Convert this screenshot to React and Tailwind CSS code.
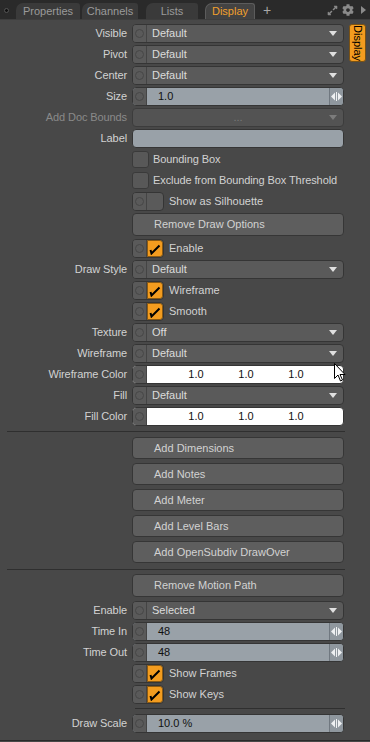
import React from "react";
import { FaCog, FaExpandAlt } from "react-icons/fa";

const font = { fontFamily: '"Liberation Sans", Arial, sans-serif' };

function Dot() {
  return (
    <div className="w-[14px] h-full flex items-center justify-center border-r border-[#444] bg-[#5a5a5a] shrink-0">
      <div className="w-[9px] h-[9px] rounded-full border border-[#464646]" />
    </div>
  );
}

function Triangle({ color = "#e0e0e0" }) {
  return (
    <svg width="8" height="5" viewBox="0 0 8 5" className="mr-[6px]">
      <path d="M0 0 L8 0 L4 5 Z" fill={color} />
    </svg>
  );
}

function Row({ label, dim, children }) {
  return (
    <div className="flex items-center h-[19px]">
      <div
        className={`w-[127px] text-right text-[11px] leading-none tracking-[-0.1px] ${
          dim ? "text-[#8a8a8a]" : "text-[#d2d2d2]"
        }`}
      >
        {label}
      </div>
      <div className="ml-[5px] flex items-center">{children}</div>
    </div>
  );
}

function Dropdown({ value }) {
  return (
    <div className="w-[212px] h-[19px] rounded-[4px] border border-[#353535] bg-[#5a5a5a] flex items-center overflow-hidden">
      <Dot />
      <div className="flex-1 pl-[5px] text-[11px] text-[#dcdcdc]">{value}</div>
      <Triangle />
    </div>
  );
}

function DisabledDropdown() {
  return (
    <div className="w-[212px] h-[19px] rounded-[4px] border border-[#3c3c3c] bg-[#535353] flex items-center">
      <div className="flex-1 text-center text-[11px] text-[#7a7a7a] leading-none pl-[14px]">...</div>
      <Triangle color="#7c7c7c" />
    </div>
  );
}

function Arrows() {
  return (
    <svg width="11" height="9" viewBox="0 0 11 9">
      <path d="M0 4.5 L4 0.5 L4 8.5 Z" fill="#eef0f2" />
      <rect x="5" y="0" width="1" height="9" fill="#eef0f2" />
      <path d="M11 4.5 L7 0.5 L7 8.5 Z" fill="#eef0f2" />
    </svg>
  );
}

function NumField({ value }) {
  return (
    <div className="w-[212px] h-[19px] rounded-[4px] border border-[#353535] bg-[#99a1a8] flex items-center overflow-hidden">
      <Dot />
      <div className="flex-1 pl-[11px] text-[11px] text-[#111]">{value}</div>
      <div className="w-[14px] h-full border-l border-[#707880] bg-[#8f979e] flex items-center justify-center">
        <Arrows />
      </div>
    </div>
  );
}

function ColorField() {
  return (
    <div className="w-[212px] h-[19px] rounded-[4px] border border-[#353535] bg-white flex items-center overflow-hidden">
      <Dot />
      <div className="flex pl-[24px] text-[11px] text-[#111]">
        <span className="w-[50px] text-center">1.0</span>
        <span className="w-[50px] text-center">1.0</span>
        <span className="w-[50px] text-center">1.0</span>
      </div>
    </div>
  );
}

function Check() {
  return (
    <svg width="12" height="12" viewBox="0 0 12 12">
      <path d="M1.5 7 L2.5 10.5 L10.5 2.5" stroke="#000" strokeWidth="2" fill="none" />
    </svg>
  );
}

function Box({ label }) {
  return (
    <div className="flex items-center h-[19px] pl-[132px]">
      <div className="w-[17px] h-[17px] rounded-[3px] border border-[#3a3a3a] bg-[#585858]" />
      <span className="ml-[4px] text-[11px] text-[#d2d2d2] tracking-[-0.1px]">{label}</span>
    </div>
  );
}

function Toggle({ label, checked }) {
  return (
    <div className="flex items-center h-[19px] pl-[132px]">
      <div className="w-[32px] h-[19px] rounded-[4px] border border-[#353535] bg-[#5a5a5a] flex overflow-hidden">
        <Dot />
        <div
          className={`flex-1 flex items-center justify-center ${
            checked ? "bg-[#f39c1f] border border-[#8a5a14] rounded-r-[3px]" : ""
          }`}
        >
          {checked && <Check />}
        </div>
      </div>
      <span className="ml-[5px] text-[11px] text-[#d2d2d2]">{label}</span>
    </div>
  );
}

function Button({ label, tall }) {
  return (
    <div className="pl-[132px]">
      <div
        className={`w-[212px] ${
          tall ? "h-[23px]" : "h-[22px]"
        } rounded-[4px] border border-[#363636] bg-[#5e5e5e] flex items-center pl-[21px] text-[11px] text-[#d2d2d2]`}
      >
        {label}
      </div>
    </div>
  );
}

function Sep({ h, at, from = 7 }) {
  return (
    <div className={`relative ${h}`}>
      <div className={`absolute ${at} right-[3px] h-[1px] bg-[#2f2f2f]`} style={{ left: from }} />
    </div>
  );
}

function Tab({ label, w, active }) {
  return (
    <div
      className={`${w} h-[16px] rounded-tl-[7px] rounded-tr-[3px] flex items-center justify-center text-[11px] ${
        active
          ? "bg-[#434343] text-[#f2a02c] border-t border-l border-r border-[#5c5c5c]"
          : "bg-[#3a3a3a] text-[#9a9a9a]"
      }`}
    >
      {label}
    </div>
  );
}

export default function App() {
  return (
    <div className="w-[370px] h-[742px] bg-[#484848] overflow-hidden relative" style={font}>
      <div className="h-[20px] bg-[#2a2a2a] flex items-end border-b border-[#3e3e3e] relative">
        <div className="absolute left-[4px] top-[8px] w-[5px] h-[5px] rounded-full bg-[#111] border border-[#555]" />
        <div className="flex items-end gap-[2px] ml-[16px]">
          <Tab label="Properties" w="w-[64px]" />
          <Tab label="Channels" w="w-[56px]" />
          <div className="w-[4px]" />
          <Tab label="Lists" w="w-[52px]" />
          <div className="w-[3px]" />
          <Tab label="Display" w="w-[50px]" active />
        </div>
        <span className="ml-[8px] mb-[2px] text-[14px] leading-none text-[#a8a8a8]">+</span>
        <div className="ml-auto flex items-center gap-[4px] mb-[3px] mr-[4px] text-[#8a8a8a]">
          <FaExpandAlt size={11} />
          <FaCog size={12} />
          <svg width="5" height="8" viewBox="0 0 5 8" className="ml-[3px]">
            <path d="M0 0 L5 4 L0 8 Z" fill="#8a8a8a" />
          </svg>
        </div>
      </div>

      <div className="flex h-[720px]">
        <div className="w-[348px] flex flex-col gap-[2px] pt-[4px]">
          <Row label="Visible"><Dropdown value="Default" /></Row>
          <Row label="Pivot"><Dropdown value="Default" /></Row>
          <Row label="Center"><Dropdown value="Default" /></Row>
          <Row label="Size"><NumField value="1.0" /></Row>
          <Row label="Add Doc Bounds" dim><DisabledDropdown /></Row>
          <Row label="Label">
            <div className="w-[212px] h-[19px] rounded-[4px] border border-[#353535] bg-[#99a1a8]" />
          </Row>
          <Box label="Bounding Box" />
          <Box label="Exclude from Bounding Box Threshold" />
          <Toggle label="Show as Silhouette" />
          <div className="h-[24px]">
            <Button label="Remove Draw Options" tall />
          </div>
          <Toggle label="Enable" checked />
          <Row label="Draw Style"><Dropdown value="Default" /></Row>
          <Toggle label="Wireframe" checked />
          <Toggle label="Smooth" checked />
          <Row label="Texture"><Dropdown value="Off" /></Row>
          <Row label="Wireframe"><Dropdown value="Default" /></Row>
          <Row label="Wireframe Color"><ColorField /></Row>
          <Row label="Fill"><Dropdown value="Default" /></Row>
          <Row label="Fill Color"><ColorField /></Row>
          <Sep h="h-[7px]" at="top-[3px]" />
          <div className="flex flex-col gap-[4px]">
            <Button label="Add Dimensions" />
            <Button label="Add Notes" />
            <Button label="Add Meter" />
            <Button label="Add Level Bars" />
            <Button label="Add OpenSubdiv DrawOver" />
          </div>
          <Sep h="h-[7px]" at="top-[4px]" />
          <div className="h-[25px]">
            <Button label="Remove Motion Path" tall />
          </div>
          <Row label="Enable"><Dropdown value="Selected" /></Row>
          <Row label="Time In"><NumField value="48" /></Row>
          <Row label="Time Out"><NumField value="48" /></Row>
          <Toggle label="Show Frames" checked />
          <Toggle label="Show Keys" checked />
          <Sep h="h-[6px]" at="top-[2px]" from={135} />
          <Row label="Draw Scale"><NumField value="10.0 %" /></Row>
        </div>
        <div className="flex-1 pt-[4px] pl-[1px]">
          <div className="w-[17px] h-[38px] rounded-[3px] bg-[#f39c1f] border border-[#7a5214] flex items-center justify-center">
            <span className="[writing-mode:vertical-rl] text-[11px] text-black leading-none">Display</span>
          </div>
        </div>
      </div>
      <div className="h-[1px] bg-[#2a2a2a]" />

      <svg
        width="12"
        height="19"
        viewBox="0 0 12 19"
        className="absolute left-[334px] top-[363px]"
      >
        <path d="M0.5 0.5 L0.5 15.5 L4 12 L6.5 18 L8.5 17 L6 11.5 L11 11.5 Z" fill="#fff" stroke="#000" strokeWidth="1" />
      </svg>
    </div>
  );
}
